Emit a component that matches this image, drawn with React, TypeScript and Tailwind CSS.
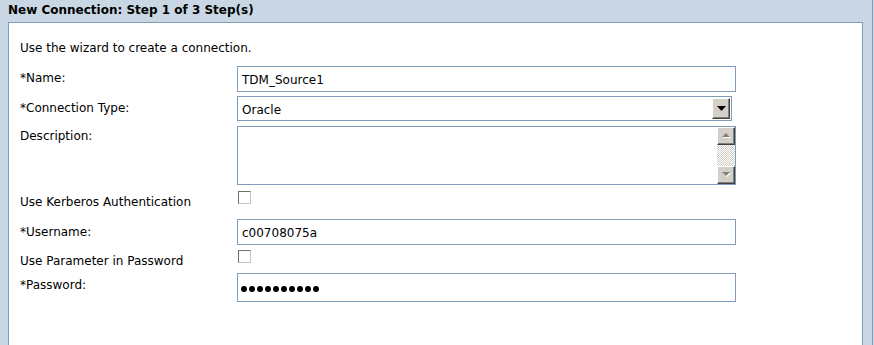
import React from "react";

const Checkbox = () => (
  <div className="w-[13px] h-[13px] bg-white border border-t-[#707070] border-l-[#707070] border-b-[#c8c4bc] border-r-[#c8c4bc]" />
);

const Btn = ({ children, className = "" }: { children: React.ReactNode; className?: string }) => (
  <div
    className={
      "flex items-center justify-center bg-[#d4d0c8] border border-t-[#ffffff] border-l-[#ffffff] border-b-[#404040] border-r-[#404040] shadow-[inset_-1px_-1px_0_#808080] " +
      className
    }
  >
    {children}
  </div>
);

export default function App() {
  const label = "w-[217px] shrink-0 text-[12px] leading-[16px] text-black";
  return (
    <div className="w-[874px] h-[345px] overflow-hidden bg-[#c9d7e4] font-['DejaVu_Sans',sans-serif]">
      <div className="w-[873px] h-[345px] border-r border-[#7f9db9]">
        <div className="h-[22px] pl-2 pt-[2px] text-[12px] leading-[16px] font-bold text-black">
          New Connection: Step 1 of 3 Step(s)
        </div>
        <div className="ml-2 w-[855px] h-[340px] bg-white border border-[#7f9db9] pl-[11px] pt-[17px]">
          <div className="text-[12px] leading-[16px] text-black">Use the wizard to create a connection.</div>

          <div className="flex items-start mt-[10px]">
            <div className={label + " mt-[4px]"}>*Name:</div>
            <div className="w-[499px] h-[26px] border border-[#7f9db9] flex items-center pl-[4px] pt-[2px] text-[12px] text-black">
              TDM_Source1
            </div>
          </div>

          <div className="flex items-start mt-[4px]">
            <div className={label + " mt-[4px]"}>*Connection Type:</div>
            <div className="w-[495px] h-[25px] border border-[#7f9db9] flex items-center justify-between pl-[4px] pr-[1px] text-[12px] text-black">
              <span className="pt-[2px]">Oracle</span>
              <Btn className="w-[18px] h-[21px]">
                <svg width="9" height="5" viewBox="0 0 9 5">
                  <path d="M0 0h9L4.5 5z" fill="#000" />
                </svg>
              </Btn>
            </div>
          </div>

          <div className="flex items-start mt-[5px]">
            <div className={label + " mt-[2px]"}>Description:</div>
            <div className="w-[499px] h-[59px] border border-[#7f9db9] flex justify-end">
              <div className="w-[18px] h-full flex flex-col">
                <Btn className="w-[18px] h-[18px]">
                  <svg width="9" height="6" viewBox="0 0 9 6">
                    <path d="M1 5h8L5 1z" fill="#fff" />
                    <path d="M0 4h8L4 0z" fill="#808080" />
                  </svg>
                </Btn>
                <div className="flex-1 bg-[repeating-conic-gradient(#d4d0c8_0_25%,#ffffff_0_50%)] bg-size-[2px_2px]" />
                <Btn className="w-[18px] h-[18px]">
                  <svg width="9" height="6" viewBox="0 0 9 6">
                    <path d="M1 1h8L5 5z" fill="#fff" />
                    <path d="M0 0h8L4 4z" fill="#808080" />
                  </svg>
                </Btn>
              </div>
            </div>
          </div>

          <div className="flex items-start mt-[6px] h-[18px]">
            <div className={label + " mt-[3px]"}>Use Kerberos Authentication</div>
            <div className="ml-[1px]">
              <Checkbox />
            </div>
          </div>

          <div className="flex items-start mt-[10px]">
            <div className={label + " mt-[5px]"}>*Username:</div>
            <div className="w-[499px] h-[26px] border border-[#7f9db9] flex items-center pl-[4px] pt-[2px] text-[12px] text-black">
              c00708075a
            </div>
          </div>

          <div className="flex items-start mt-[5px] h-[18px]">
            <div className={label + " mt-[3px]"}>Use Parameter in Password</div>
            <div className="ml-[1px]">
              <Checkbox />
            </div>
          </div>

          <div className="flex items-start mt-[5px]">
            <div className={label + " mt-[4px]"}>*Password:</div>
            <div className="w-[499px] h-[29px] border border-[#7f9db9] flex items-center pl-[3px] pt-[2px] gap-[2px]">
              {Array.from({ length: 10 }).map((_, i) => (
                <div key={i} className="w-[6px] h-[6px] rounded-full bg-black" />
              ))}
            </div>
          </div>
        </div>
      </div>
    </div>
  );
}
